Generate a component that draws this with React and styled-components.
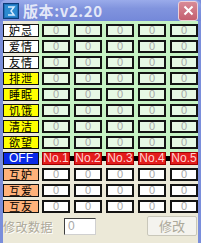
import { Fragment } from "react";
import styled, { createGlobalStyle } from "styled-components";

const Global = createGlobalStyle`
    html, body {
        margin: 0;
        padding: 0;
        background: #ffffff;
    }
`

const Window = styled.div`
    width: 201px;
    height: 243px;
    box-sizing: border-box;
    background: #7a8edb;
    display: flex;
    flex-direction: column;
    padding: 0 3px 3px 3px;
    font-family: "Liberation Sans", "Noto Sans CJK SC", sans-serif;
`

const TitleBar = styled.div`
    height: 26px;
    margin: 0 -3px;
    padding: 0 3px 0 3px;
    display: flex;
    align-items: center;
    gap: 4px;
    background: linear-gradient(#9aabea, #8194de 40%, #7488d9);
    border-radius: 6px 6px 0 0;
`

const Title = styled.span`
    flex: 1;
    color: #e4e8f8;
    font-family: "Noto Sans CJK SC", sans-serif;
    font-weight: 700;
    font-size: 15px;
    letter-spacing: 0.6px;
`

const CloseButton = styled.div`
    width: 20px;
    height: 20px;
    box-sizing: border-box;
    border: 1px solid #ecd0d8;
    border-radius: 3px;
    background: linear-gradient(#d88a96, #c4606f);
    display: flex;
    align-items: center;
    justify-content: center;
`

const Body = styled.div`
    flex: 1;
    background: #ece9d8;
    display: flex;
    flex-direction: column;
`

const Grid = styled.div`
    display: grid;
    grid-template-columns: 35px repeat(5, 28px);
    grid-auto-rows: 13px;
    column-gap: 4px;
    row-gap: 3px;
    padding: 3px 0 0 0;
    background:
        linear-gradient(to right, #ece9d8 35px, transparent 35px),
        linear-gradient(#c6f3c4 137px, #ece9d8 137px);
`

const Label = styled.div`
    box-sizing: border-box;
    height: 13px;
    margin-right: -1px;
    border: 1px solid #101010;
    background: ${p => p.$bg};
    color: ${p => p.$color || "#000"};
    font-family: ${p => p.$latin ? `"Liberation Sans", sans-serif` : `"Noto Sans CJK SC", sans-serif`};
    font-size: ${p => p.$latin ? "12px" : "11px"};
    line-height: ${p => p.$latin ? "11px" : "10px"};
    letter-spacing: ${p => p.$latin ? "0" : "1px"};
    text-align: center;
`

const Cell = styled.div`
    box-sizing: border-box;
    height: 13px;
    border: 2px solid #141414;
    background: ${p => p.$bg};
    color: #a8a8a8;
    font-size: 11px;
    line-height: 9px;
    text-align: center;
`

const NoStrip = styled.div`
    grid-column: 2 / span 5;
    display: grid;
    grid-template-columns: repeat(5, 28px);
    column-gap: 4px;
    background: linear-gradient(transparent 4px, #000 4px, #000 9px, transparent 9px);
`

const NoCell = styled.div`
    box-sizing: border-box;
    height: 13px;
    border: 1px solid #a00000;
    background: #e41c1c;
    color: #ffd2d2;
    font-size: 12px;
    line-height: 11px;
    text-align: center;
`

const Footer = styled.div`
    margin-top: auto;
    height: 26px;
    display: flex;
    align-items: center;
    padding: 0 1px 4px 0;
`

const FooterLabel = styled.span`
    font-family: "Noto Sans CJK SC", sans-serif;
    font-size: 12px;
    letter-spacing: 0.5px;
    color: #aca899;
    text-shadow: 1px 1px 0 #ffffff;
    width: 61px;
`

const ValueBox = styled.div`
    box-sizing: border-box;
    width: 32px;
    height: 17px;
    border: 1px solid;
    border-color: #404040 #d0d0d0 #d0d0d0 #404040;
    background: #ffffff;
    color: #a8a8a8;
    font-size: 12px;
    line-height: 15px;
    padding-left: 3px;
`

const Button = styled.div`
    margin-left: auto;
    box-sizing: border-box;
    width: 50px;
    height: 20px;
    border: 1px solid #c9c7ba;
    border-radius: 2px;
    background: #f4f3ee;
    color: #aca899;
    font-family: "Noto Sans CJK SC", sans-serif;
    font-size: 13px;
    line-height: 18px;
    text-align: center;
`

const rows = [
    { name: "妒忌", bg: "#ffffff" },
    { name: "爱情", bg: "#ffffff" },
    { name: "友情", bg: "#ffffff" },
    { name: "排泄", bg: "#ffff00" },
    { name: "睡眠", bg: "#ffff00" },
    { name: "饥饿", bg: "#ffff00" },
    { name: "清洁", bg: "#ffff00" },
    { name: "欲望", bg: "#ffff00" },
]

const mutual = ["互妒", "互爱", "互友"]

const AppIcon = () => (
    <svg width="16" height="16" viewBox="0 0 16 16">
        <rect x="0.5" y="0.5" width="15" height="15" fill="#1f6fb8" stroke="#0b3d7a" />
        <rect x="2" y="2" width="12" height="12" fill="#2b8ad0" />
        <path d="M5 4 H11 L8 8 L11 12 H5" fill="none" stroke="#d8ecff" strokeWidth="1.5" />
    </svg>
)

const App = () => {
    return (
        <>
            <Global />
            <Window>
                <TitleBar>
                    <AppIcon />
                    <Title>版本:v2.20</Title>
                    <CloseButton>
                        <svg width="11" height="11" viewBox="0 0 11 11">
                            <path d="M1.5 1.5 L9.5 9.5 M9.5 1.5 L1.5 9.5" stroke="#fff" strokeWidth="2" />
                        </svg>
                    </CloseButton>
                </TitleBar>
                <Body>
                    <Grid>
                        {rows.map(r => (
                            <Fragment key={r.name}>
                                <Label $bg={r.bg}>{r.name}</Label>
                                {[0, 1, 2, 3, 4].map(i => (
                                    <Cell key={i} $bg="#e6f8e4">0</Cell>
                                ))}
                            </Fragment>
                        ))}
                        <Label $bg="#0a2ae6" $color="#ffffff" $latin>OFF</Label>
                        <NoStrip>
                            {[1, 2, 3, 4, 5].map(n => (
                                <NoCell key={n}>No.{n}</NoCell>
                            ))}
                        </NoStrip>
                        {mutual.map(m => (
                            <Fragment key={m}>
                                <Label $bg="#ffb27a">{m}</Label>
                                {[0, 1, 2, 3, 4].map(i => (
                                    <Cell key={i} $bg="#ffffff">0</Cell>
                                ))}
                            </Fragment>
                        ))}
                    </Grid>
                    <Footer>
                        <FooterLabel>修改数据</FooterLabel>
                        <ValueBox>0</ValueBox>
                        <Button>修改</Button>
                    </Footer>
                </Body>
            </Window>
        </>
    )
}

export default App
